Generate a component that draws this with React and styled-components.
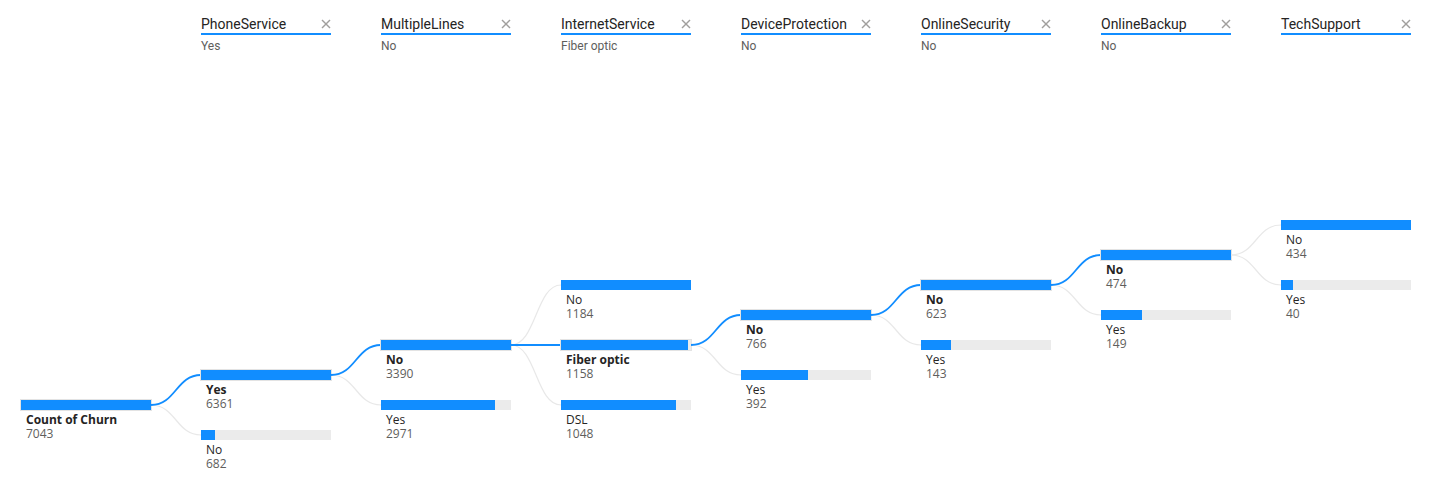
import React from "react";
import styled, { createGlobalStyle } from "styled-components";

const Global = createGlobalStyle`
  html, body { margin: 0; padding: 0; background: #fff; }
  body { font-family: "Open Sans", "Noto Sans", sans-serif; }
`;

const BLUE = "#118DFF";
const COL_W = 130;
const GAP = 50;
const HEAD_H = 60;
const NODE_H = 60;
const TREE_H = 424;

const Canvas = styled.div`
  display: flex;
  flex-direction: row;
  align-items: flex-start;
  padding-left: 21px;
  height: 484px;
  box-sizing: border-box;
  overflow: hidden;
`;

const Level = styled.div`
  width: ${COL_W}px;
  flex: 0 0 ${COL_W}px;
  display: flex;
  flex-direction: column;
`;

const Header = styled.div`
  height: ${HEAD_H}px;
  box-sizing: border-box;
  padding-top: 14px;
`;

const TitleRow = styled.div`
  display: flex;
  align-items: center;
  justify-content: space-between;
  height: 19px;
  border-bottom: 2px solid ${BLUE};
  font-family: Roboto, "Liberation Sans", sans-serif;
  font-size: 14px;
  line-height: 18px;
  color: #252423;
`;

const Close = styled.svg`
  width: 10px;
  height: 10px;
  margin-right: 0px;
  margin-top: 1px;
  stroke: #a19f9d;
  stroke-width: 1.4;
`;

const HeadValue = styled.div`
  margin-top: 3px;
  font-family: Roboto, "Liberation Sans", sans-serif;
  font-size: 12px;
  line-height: 16px;
  color: #605e5c;
`;

const Nodes = styled.div`
  display: flex;
  flex-direction: column;
`;

const Node = styled.div`
  height: ${NODE_H}px;
  display: flex;
  flex-direction: column;
`;

const Track = styled.div`
  height: 10px;
  width: ${COL_W}px;
  background: #ebebeb;
  box-shadow: ${(p) => (p.$selected ? "0 0 0 1px #e3e3e3" : "none")};
`;

const Fill = styled.div`
  height: 100%;
  background: ${BLUE};
`;

const Label = styled.div`
  padding: 3px 0 0 5px;
  font-size: 12px;
  line-height: 14px;
`;

const Name = styled.div`
  color: #252423;
  font-weight: ${(p) => (p.$selected ? 700 : 400)};
`;

const Value = styled.div`
  color: #605e5c;
`;

const Links = styled.svg`
  flex: 0 0 ${GAP}px;
  width: ${GAP}px;
  height: ${TREE_H}px;
  margin-top: ${HEAD_H}px;
  overflow: visible;
`;

const raw = [
  { title: null, nodes: [["Count of Churn", 7043, true]] },
  { title: "PhoneService", value: "Yes", nodes: [["Yes", 6361, true], ["No", 682]] },
  { title: "MultipleLines", value: "No", nodes: [["No", 3390, true], ["Yes", 2971]] },
  {
    title: "InternetService",
    value: "Fiber optic",
    nodes: [["No", 1184], ["Fiber optic", 1158, true], ["DSL", 1048]],
  },
  { title: "DeviceProtection", value: "No", nodes: [["No", 766, true], ["Yes", 392]] },
  { title: "OnlineSecurity", value: "No", nodes: [["No", 623, true], ["Yes", 143]] },
  { title: "OnlineBackup", value: "No", nodes: [["No", 474, true], ["Yes", 149]] },
  { title: "TechSupport", value: "", nodes: [["No", 434], ["Yes", 40]] },
];

// compute bar top (relative to tree area) for every node
const levels = [];
let parentY = 400 - HEAD_H;
raw.forEach((lvl, i) => {
  const n = lvl.nodes.length;
  const firstY = i === 0 ? parentY : parentY - ((n - 1) * NODE_H) / 2;
  const max = Math.max(...lvl.nodes.map((d) => d[1]));
  const nodes = lvl.nodes.map(([name, value, selected], k) => ({
    name,
    value,
    selected: !!selected,
    y: firstY + k * NODE_H,
    pct: value / max,
  }));
  levels.push({ ...lvl, firstY, nodes, parentY });
  const sel = nodes.find((d) => d.selected);
  if (sel) parentY = sel.y;
});

function Connector({ from, to }) {
  const sel = from.nodes.find((d) => d.selected);
  if (!sel) return <Links />;
  const y0 = sel.y + 5;
  return (
    <Links viewBox={`0 0 ${GAP} ${TREE_H}`}>
      {to.nodes
        .slice()
        .sort((a, b) => a.selected - b.selected)
        .map((c, i) => {
          const y1 = c.y + 5;
          return (
            <path
              key={i}
              d={`M0 ${y0} C25 ${y0} 25 ${y1} ${GAP} ${y1}`}
              fill="none"
              stroke={c.selected ? BLUE : "#e8e8e8"}
              strokeWidth={c.selected ? 1.8 : 1.2}
            />
          );
        })}
    </Links>
  );
}

function LevelColumn({ lvl }) {
  return (
    <Level>
      <Header>
        {lvl.title && (
          <>
            <TitleRow>
              <span>{lvl.title}</span>
              <Close viewBox="0 0 10 10">
                <line x1="1" y1="1" x2="9" y2="9" />
                <line x1="9" y1="1" x2="1" y2="9" />
              </Close>
            </TitleRow>
            <HeadValue>{lvl.value}</HeadValue>
          </>
        )}
      </Header>
      <Nodes style={{ paddingTop: lvl.nodes[0].y }}>
        {lvl.nodes.map((n, i) => (
          <Node key={i}>
            <Track $selected={n.selected}>
              <Fill style={{ width: Math.round(n.pct * COL_W) }} />
            </Track>
            <Label>
              <Name $selected={n.selected}>{n.name}</Name>
              <Value>{n.value}</Value>
            </Label>
          </Node>
        ))}
      </Nodes>
    </Level>
  );
}

export default function App() {
  return (
    <>
      <Global />
      <Canvas>
        {levels.map((lvl, i) => (
          <React.Fragment key={i}>
            {i > 0 && <Connector from={levels[i - 1]} to={lvl} />}
            <LevelColumn lvl={lvl} />
          </React.Fragment>
        ))}
      </Canvas>
    </>
  );
}
